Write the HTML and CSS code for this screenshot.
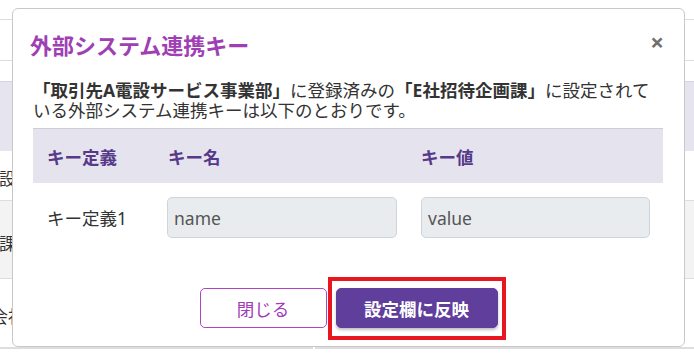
FILE: index.html
```html
<!DOCTYPE html>
<html lang="ja">
<head>
<meta charset="utf-8">
<title>外部システム連携キー</title>
<link rel="stylesheet" href="styles.css">
</head>
<body>
<div class="page">
  <div class="bg-top"></div>
  <div class="bg-bar"></div>
  <div class="bg-gap"></div>
  <div class="bg-head"></div>
  <div class="bg-row r1"><span class="bg-text t1">電設</span></div>
  <div class="bg-row r2"><span class="bg-text t2">画課</span></div>
  <div class="bg-row r3"><span class="bg-text t3">会社</span><span class="bg-divider"></span></div>
</div>

<div class="modal">
  <div class="modal-header">
    <h2 class="modal-title">外部システム連携キー</h2>
    <span class="close">×</span>
  </div>
  <div class="modal-body">
    <p class="lead"><b>「取引先A電設サービス事業部」</b>に登録済みの<b>「E社招待企画課」</b>に設定されて<br>いる外部システム連携キーは以下のとおりです。</p>
    <div class="keys">
      <div class="keys-head">
        <div class="cell c1">キー定義</div>
        <div class="cell">キー名</div>
        <div class="cell">キー値</div>
      </div>
      <div class="keys-row">
        <div class="cell c1">キー定義1</div>
        <div class="cell"><div class="field">name</div></div>
        <div class="cell"><div class="field">value</div></div>
      </div>
    </div>
  </div>
  <div class="modal-footer">
    <button class="btn btn-outline">閉じる</button>
    <span class="highlight"><button class="btn btn-primary">設定欄に反映</button></span>
  </div>
</div>
</body>
</html>
```

FILE: styles.css
```css
html, body {
  margin: 0;
  padding: 0;
  background: #ffffff;
  font-family: "Noto Sans", "Noto Sans CJK JP", sans-serif;
  color: #333333;
}

.page {
  width: 694px;
  height: 355px;
  overflow: hidden;
  display: flex;
  flex-direction: column;
}

.bg-top { height: 19px; flex: none; }
.bg-bar {
  height: 40px;
  flex: none;
  border-top: 1px solid #dddddd;
  border-bottom: 1px solid #dddddd;
}
.bg-gap { height: 20px; flex: none; }
.bg-head {
  height: 69px;
  flex: none;
  background: #e6e4ef;
  border-top: 1px solid #d7d5e2;
}
.bg-row {
  flex: none;
  display: flex;
  align-items: center;
  border-bottom: 1px solid #dddddd;
  position: relative;
  font-size: 17px;
}
.r1 { height: 49px; }
.r2 { height: 77px; background: #f3f3f3; }
.r3 { height: 68px; border-bottom: 2px solid #dddddd; }

.bg-text { white-space: nowrap; }
.t1 { margin-left: -18px; margin-top: 4px; }
.t2 { margin-left: -18px; margin-top: 6px; }
.t3 { margin-left: -9px; margin-top: 4px; }

.bg-divider {
  position: absolute;
  left: 313px;
  bottom: -2px;
  width: 2px;
  height: 4px;
  background: #ffffff;
}

.modal {
  position: absolute;
  left: 12px;
  top: 8px;
  width: 673px;
  height: 339px;
  box-sizing: border-box;
  background: #ffffff;
  border: 1px solid #c9c9c9;
  border-radius: 6px;
  display: flex;
  flex-direction: column;
}

.modal-header {
  display: flex;
  justify-content: space-between;
  align-items: center;
  padding: 22px 20px 0 17px;
  height: 28px;
}

.modal-title {
  margin: 0;
  font-size: 22px;
  line-height: 28px;
  font-weight: 700;
  color: #a03eb4;
}

.close {
  font-size: 24px;
  font-weight: 700;
  line-height: 24px;
  color: #707070;
  margin-top: -6px;
}

.modal-body {
  padding: 21px 21px 0 20px;
}

.lead {
  margin: 0;
  font-size: 17.5px;
  line-height: 20px;
  color: #333333;
}
.lead b { font-weight: 700; }

.keys {
  margin-top: 8px;
}

.keys-head, .keys-row {
  display: grid;
  grid-template-columns: 122px 1fr 1fr;
}

.keys-head {
  height: 55px;
  box-sizing: border-box;
  background: #e5e3ee;
  border-top: 1px solid #cfcddc;
  align-items: center;
  font-weight: 700;
  font-size: 17.5px;
  color: #563989;
}

.keys-row {
  padding-top: 14px;
  align-items: center;
  font-size: 17.5px;
  color: #333333;
}

.cell {
  padding: 0 12px;
}
.cell.c1 { padding-left: 14px; }
.keys-head .cell:nth-child(2) { padding-left: 13px; }

.field {
  height: 41px;
  box-sizing: border-box;
  background: #e9ecef;
  border: 1px solid #ced4da;
  border-radius: 5px;
  padding: 0 6px;
  display: flex;
  align-items: center;
  font-size: 17.5px;
  color: #555555;
}

.keys-row .cell:nth-child(3) { padding-right: 13px; }

.modal-footer {
  margin-top: auto;
  padding-bottom: 18px;
  display: flex;
  justify-content: center;
  gap: 9px;
}

.btn {
  height: 40px;
  box-sizing: border-box;
  border-radius: 5px;
  font-family: "Noto Sans", "Noto Sans CJK JP", sans-serif;
  font-size: 17.5px;
  cursor: pointer;
  margin: 0;
}

.btn-outline {
  width: 127px;
  background: #ffffff;
  border: 1px solid #b045c4;
  color: #a23cb8;
}

.btn-primary {
  width: 162px;
  background: #5f3e9c;
  border: 1px solid #5f3e9c;
  color: #ffffff;
  font-weight: 700;
  box-shadow: 0 2px 3px rgba(0, 0, 0, 0.25);
  display: block;
}

.highlight {
  position: relative;
  display: block;
}
.highlight::after {
  content: "";
  position: absolute;
  left: -8px;
  right: -8px;
  top: -11px;
  bottom: -12px;
  border: 4px solid #e8161f;
  pointer-events: none;
}
```
